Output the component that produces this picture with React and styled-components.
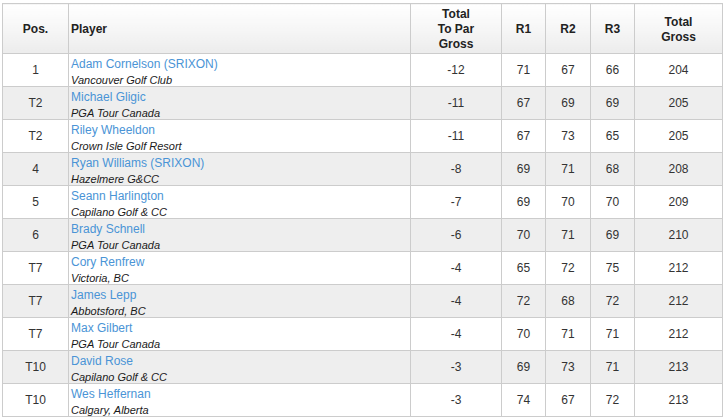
import styled, { createGlobalStyle } from "styled-components"

const GlobalStyle = createGlobalStyle`
  body {
    margin: 0;
    background: #fff;
    font-family: "Liberation Sans", Arial, sans-serif;
  }
`

const rows = [
  ["1", "Adam Cornelson (SRIXON)", "Vancouver Golf Club", "-12", 71, 67, 66, 204],
  ["T2", "Michael Gligic", "PGA Tour Canada", "-11", 67, 69, 69, 205],
  ["T2", "Riley Wheeldon", "Crown Isle Golf Resort", "-11", 67, 73, 65, 205],
  ["4", "Ryan Williams (SRIXON)", "Hazelmere G&CC", "-8", 69, 71, 68, 208],
  ["5", "Seann Harlington", "Capilano Golf & CC", "-7", 69, 70, 70, 209],
  ["6", "Brady Schnell", "PGA Tour Canada", "-6", 70, 71, 69, 210],
  ["T7", "Cory Renfrew", "Victoria, BC", "-4", 65, 72, 75, 212],
  ["T7", "James Lepp", "Abbotsford, BC", "-4", 72, 68, 72, 212],
  ["T7", "Max Gilbert", "PGA Tour Canada", "-4", 70, 71, 71, 212],
  ["T10", "David Rose", "Capilano Golf & CC", "-3", 69, 73, 71, 213],
  ["T10", "Wes Heffernan", "Calgary, Alberta", "-3", 74, 67, 72, 213],
]

const widths = [66, 342, 91, 44, 45, 44, 88]

function App() {
  return (
    <Page>
      <GlobalStyle />
      <Table>
        <colgroup>
          {widths.map((w, i) => <col key={i} style={{ width: w }} />)}
        </colgroup>
        <thead>
          <tr>
            <Th>Pos.</Th>
            <Th $left>Player</Th>
            <Th>Total<br />To Par<br />Gross</Th>
            <Th>R1</Th>
            <Th>R2</Th>
            <Th>R3</Th>
            <Th>Total<br />Gross</Th>
          </tr>
        </thead>
        <tbody>
          {rows.map((r, i) => (
            <Row key={i} $alt={i % 2 === 1}>
              <Td>{r[0]}</Td>
              <PlayerCell>
                <Name href="#">{r[1]}</Name>
                <Club>{r[2]}</Club>
              </PlayerCell>
              <Td>{r[3]}</Td>
              <Td>{r[4]}</Td>
              <Td>{r[5]}</Td>
              <Td>{r[6]}</Td>
              <Td>{r[7]}</Td>
            </Row>
          ))}
        </tbody>
      </Table>
    </Page>
  )
}
export default App

const Page = styled.div`
  padding: 3px 0 0 2px;
`

const Table = styled.table`
  width: 721px;
  table-layout: fixed;
  border-collapse: collapse;
  border: 1px solid #cccccc;
  font-size: 12px;
  color: #333;
`

const Th = styled.th`
  height: 47px;
  padding: 2px 2px 0;
  border: 1px solid #cccccc;
  background: linear-gradient(to bottom, #ffffff 0%, #f6f6f6 50%, #ececec 100%);
  font-weight: bold;
  font-size: 12px;
  line-height: 15px;
  color: #222;
  text-align: ${p => (p.$left ? "left" : "center")};
  vertical-align: middle;
`

const Row = styled.tr`
  background: ${p => (p.$alt ? "#eeeeee" : "#ffffff")};
`

const Td = styled.td`
  height: 32px;
  padding: 0;
  border: 1px solid #cccccc;
  text-align: center;
  vertical-align: middle;
`

const PlayerCell = styled(Td)`
  text-align: left;
  vertical-align: top;
  padding: 0 3px 0 2px;
`

const Name = styled.a`
  display: block;
  padding-top: 3px;
  color: #4a94d6;
  text-decoration: none;
  font-size: 12px;
  line-height: 14px;
`

const Club = styled.div`
  padding-top: 3px;
  font-size: 11px;
  font-style: italic;
  line-height: 12px;
  color: #1a1a1a;
`
